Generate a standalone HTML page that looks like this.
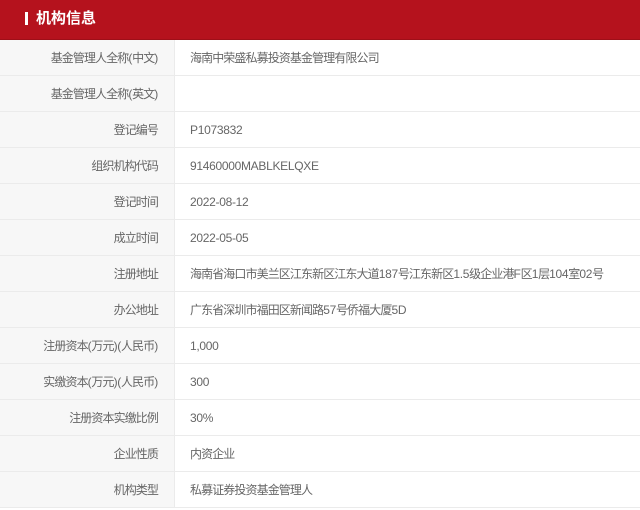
<!DOCTYPE html>
<html><head><meta charset="utf-8"><style>
body{margin:0;width:640px;height:510px;background:#fff;font-family:"Liberation Sans","Noto Sans CJK SC",sans-serif;overflow:hidden}
.h{height:39px;background:#b5121d;position:relative;border-bottom:1px solid #9e0f18}
.h i{position:absolute;left:25px;top:12px;width:3px;height:13px;background:#fff}
.h span{position:absolute;left:36px;top:9px;color:#fff;font-size:15px;font-weight:bold;line-height:20px}
.r{height:35px;border-bottom:1px solid #ebebeb;display:flex;font-size:12px;letter-spacing:-0.9px;color:#666;line-height:36px}
.r b{font-weight:normal;letter-spacing:-0.3px}
.l{width:175px;background:#f7f7f7;text-align:right;padding-right:16px;box-sizing:border-box;border-right:1px solid #ebebeb}
.v{padding-left:15px;color:#666}
</style></head><body>
<div class="h"><i></i><span>机构信息</span></div>
<div class="r"><div class="l">基金管理人全称<b>(</b>中文<b>)</b></div><div class="v">海南中荣盛私募投资基金管理有限公司</div></div>
<div class="r"><div class="l">基金管理人全称<b>(</b>英文<b>)</b></div><div class="v"></div></div>
<div class="r"><div class="l">登记编号</div><div class="v"><b>P1073832</b></div></div>
<div class="r"><div class="l">组织机构代码</div><div class="v"><b>91460000MABLKELQXE</b></div></div>
<div class="r"><div class="l">登记时间</div><div class="v"><b>2022-08-12</b></div></div>
<div class="r"><div class="l">成立时间</div><div class="v"><b>2022-05-05</b></div></div>
<div class="r"><div class="l">注册地址</div><div class="v">海南省海口市美兰区江东新区江东大道<b>187</b>号江东新区<b>1.5</b>级企业港<b>F</b>区<b>1</b>层<b>104</b>室<b>02</b>号</div></div>
<div class="r"><div class="l">办公地址</div><div class="v">广东省深圳市福田区新闻路<b>57</b>号侨福大厦<b>5D</b></div></div>
<div class="r"><div class="l">注册资本<b>(</b>万元<b>)(</b>人民币<b>)</b></div><div class="v"><b>1,000</b></div></div>
<div class="r"><div class="l">实缴资本<b>(</b>万元<b>)(</b>人民币<b>)</b></div><div class="v"><b>300</b></div></div>
<div class="r"><div class="l">注册资本实缴比例</div><div class="v"><b>30%</b></div></div>
<div class="r"><div class="l">企业性质</div><div class="v">内资企业</div></div>
<div class="r"><div class="l">机构类型</div><div class="v">私募证券投资基金管理人</div></div>
</body></html>
